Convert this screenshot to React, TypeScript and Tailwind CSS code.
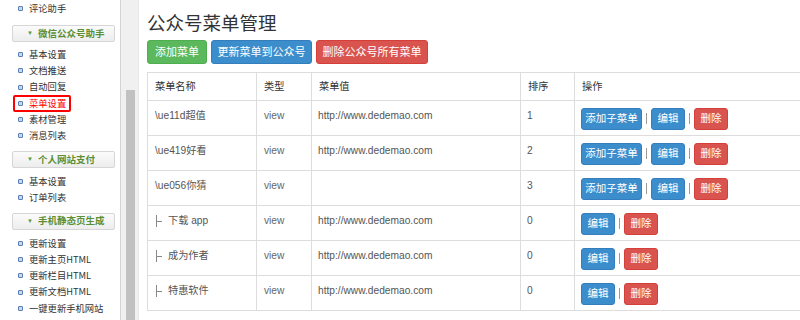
import React from "react";

const font = { fontFamily: '"Liberation Sans", "Noto Sans CJK SC", sans-serif' };

function Item({ label, active }: { label: string; active?: boolean }) {
  return (
    <div className="h-[16.3px] flex items-center">
      <div
        className={
          "flex items-center h-[17px] pl-[3px] pr-[3px] ml-[13px] rounded-[2px] border-2 " +
          (active ? "border-[#ff0000]" : "border-transparent")
        }
      >
        <span className="w-[5px] h-[5px] border border-[#5a7db3] bg-[#c9d8ee] rounded-[1px] mr-[6px]" />
        <span
          className={"text-[9.3px] leading-none " + (active ? "text-[#ff0000]" : "text-[#333]")}
          style={{ fontFamily: '"Noto Sans CJK SC", sans-serif' }}
        >
          {label}
        </span>
      </div>
    </div>
  );
}

function Header({ label, first }: { label: string; first?: boolean }) {
  return (
    <div
      className={
        "ml-[12px] w-[103px] h-[17px] border border-[#d6d6d6] rounded-[2px] bg-gradient-to-b from-[#fbfbfb] to-[#ededed] flex items-center " +
        (first ? "mt-[8.5px] mb-[4.5px]" : "mt-[6.7px] mb-[5.5px]")
      }
    >
      <span className="text-[#5a9a32] text-[6px] ml-[14px] mr-[5px]">▼</span>
      <span
        className="text-[9.5px] font-bold text-[#5a8f35] leading-none"
        style={{ fontFamily: '"Noto Sans CJK SC", sans-serif' }}
      >
        {label}
      </span>
    </div>
  );
}

type Row = { name: string; type: string; url: string; sort: string; child?: boolean };
const rows: Row[] = [
  { name: "\\ue11d超值", type: "view", url: "http://www.dedemao.com", sort: "1" },
  { name: "\\ue419好看", type: "view", url: "http://www.dedemao.com", sort: "2" },
  { name: "\\ue056你猜", type: "view", url: "", sort: "3" },
  { name: "下载 app", type: "view", url: "http://www.dedemao.com", sort: "0", child: true },
  { name: "成为作者", type: "view", url: "http://www.dedemao.com", sort: "0", child: true },
  { name: "特惠软件", type: "view", url: "http://www.dedemao.com", sort: "0", child: true },
];

function Sep() {
  return <span className="w-[1px] h-[11px] bg-[#9a9a9a] mx-[4px]" />;
}

export default function App() {
  return (
    <div className="w-[800px] h-[320px] overflow-hidden bg-white flex" style={font}>
      <div className="w-[121px] shrink-0 border-r border-[#d4d4d4] h-full">
        <Item label="评论助手" />
        <Header label="微信公众号助手" first />
        <Item label="基本设置" />
        <Item label="文档推送" />
        <Item label="自动回复" />
        <Item label="菜单设置" active />
        <Item label="素材管理" />
        <Item label="消息列表" />
        <Header label="个人网站支付" />
        <Item label="基本设置" />
        <Item label="订单列表" />
        <Header label="手机静态页生成" />
        <Item label="更新设置" />
        <Item label="更新主页HTML" />
        <Item label="更新栏目HTML" />
        <Item label="更新文档HTML" />
        <Item label="一键更新手机网站" />
      </div>
      <div className="w-[18px] shrink-0 bg-[#f0f0f0] h-full flex flex-col pt-[90px] pl-[5px] border-r border-[#e8e8e8]">
        <div className="w-[9px] flex-1 bg-[#c1c1c1]" />
      </div>
      <div className="flex-1 pl-[8px] overflow-hidden">
        <div
          className="text-[18.5px] leading-[22px] text-[#333] mt-[11px] h-[22px]"
          style={{ fontFamily: '"Noto Sans CJK SC", sans-serif' }}
        >
          公众号菜单管理
        </div>
        <div className="flex gap-[4px] mt-[7px] h-[24px]">
          <div className="w-[60px] h-[24px] rounded-[3px] bg-[#5cb85c] border border-[#4cae4c] text-white text-[11px] flex items-center justify-center">添加菜单</div>
          <div className="w-[101px] h-[24px] rounded-[3px] bg-[#3c8dcb] border border-[#357ebd] text-white text-[11px] flex items-center justify-center">更新菜单到公众号</div>
          <div className="w-[112px] h-[24px] rounded-[3px] bg-[#d9534f] border border-[#d43f3a] text-white text-[11px] flex items-center justify-center">删除公众号所有菜单</div>
        </div>
        <table className="mt-[8px] border-collapse w-[700px] table-fixed text-[10.2px]">
          <colgroup>
            <col className="w-[109px]" />
            <col className="w-[55px]" />
            <col className="w-[209px]" />
            <col className="w-[54px]" />
            <col />
          </colgroup>
          <thead>
            <tr className="h-[28px]">
              {["菜单名称", "类型", "菜单值", "排序", "操作"].map((h) => (
                <th key={h} className="border border-[#ddd] text-left font-normal text-[#333] px-[7px] align-middle">
                  {h}
                </th>
              ))}
            </tr>
          </thead>
          <tbody>
            {rows.map((r, i) => (
              <tr key={i} className="h-[35px]">
                <td className="border border-[#ddd] align-top px-[7px] pt-[8px] text-[#555] leading-[14px]">
                  {r.child ? (
                    <span className="flex items-center">
                      <span className="relative w-[7px] h-[12px] mr-[5px] ml-[1px]">
                        <span className="absolute left-0 top-0 w-[1px] h-[12px] bg-[#888]" />
                        <span className="absolute left-0 top-[6px] w-[6px] h-[1px] bg-[#888]" />
                      </span>
                      {r.name}
                    </span>
                  ) : (
                    r.name
                  )}
                </td>
                <td className="border border-[#ddd] align-top px-[7px] pt-[8px] text-[#666] leading-[14px]">{r.type}</td>
                <td className="border border-[#ddd] align-top px-[6px] pt-[8px] text-[#555] leading-[14px]">{r.url}</td>
                <td className="border border-[#ddd] align-top px-[6px] pt-[8px] text-[#555] leading-[14px]">{r.sort}</td>
                <td className="border border-[#ddd] align-top px-[6px] pt-[6.5px]">
                  <div className="flex items-center h-[22px]">
                    {!r.child && (
                      <>
                        <div className="w-[61px] h-[22px] rounded-[3px] bg-[#3c8dcb] border border-[#357ebd] text-white text-[10.5px] flex items-center justify-center">添加子菜单</div>
                        <Sep />
                      </>
                    )}
                    <div className="w-[34px] h-[22px] rounded-[3px] bg-[#3c8dcb] border border-[#357ebd] text-white text-[10.5px] flex items-center justify-center">编辑</div>
                    <Sep />
                    <div className="w-[34px] h-[22px] rounded-[3px] bg-[#d9534f] border border-[#d43f3a] text-white text-[10.5px] flex items-center justify-center">删除</div>
                  </div>
                </td>
              </tr>
            ))}
          </tbody>
        </table>
      </div>
    </div>
  );
}
